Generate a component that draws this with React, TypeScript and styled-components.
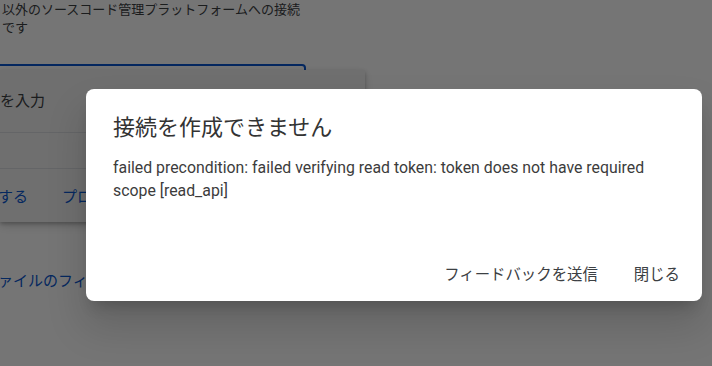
import React from 'react';
import styled, { createGlobalStyle } from 'styled-components';

const GlobalStyle = createGlobalStyle`
    html, body {
        margin: 0;
        padding: 0;
    }
    body {
        font-family: Roboto, "Noto Sans CJK JP", sans-serif;
    }
`;

const Page = styled.div`
    width: 712px;
    height: 366px;
    background-color: #ffffff;
    position: relative;
    overflow: hidden;
`;

const Content = styled.div`
    display: flex;
    flex-direction: column;
    padding-top: 1px;
`;

const Description = styled.p`
    margin: 0;
    padding-left: 2px;
    font-size: 13px;
    line-height: 18px;
    color: #3c4043;
    width: 310px;
`;

const Field = styled.div`
    margin-top: 27px;
    margin-left: -10px;
    width: 312px;
    height: 54px;
    border: 2px solid #0b57d0;
    border-radius: 4px;
`;

const Menu = styled.div`
    position: absolute;
    top: 70px;
    left: 0;
    width: 365px;
    height: 152px;
    background-color: #f1f1f1;
    box-shadow: 0 2px 4px rgba(0, 0, 0, 0.25), 0 4px 10px rgba(0, 0, 0, 0.12);
    display: flex;
    flex-direction: column;
`;

const MenuRow = styled.div<{ $height: number }>`
    height: ${(p) => p.$height}px;
    border-bottom: 1px solid #dadce0;
    display: flex;
    align-items: center;
    gap: 36px;
    font-size: 15px;
    color: #3c4043;
    padding-bottom: 3px;
    box-sizing: border-box;
    &:last-child {
        border-bottom: none;
        padding-bottom: 0;
    }
`;

const MenuLink = styled.span`
    color: #0b57d0;
    font-size: 15px;
    margin-left: -2px;
`;

const FileLink = styled.a`
    margin-top: 147px;
    font-size: 15px;
    color: #0b57d0;
    text-decoration: none;
    margin-left: -17px;
`;

const Scrim = styled.div`
    position: absolute;
    inset: 0;
    background-color: rgba(0, 0, 0, 0.54);
    display: flex;
    align-items: flex-start;
    padding: 89px 0 0 86px;
`;

const Dialog = styled.div`
    width: 616px;
    height: 212px;
    box-sizing: border-box;
    background-color: #ffffff;
    border-radius: 8px;
    box-shadow: 0 11px 15px -7px rgba(0, 0, 0, 0.2), 0 24px 38px 3px rgba(0, 0, 0, 0.14);
    padding: 24px 0 10px 27px;
    display: flex;
    flex-direction: column;
`;

const Title = styled.h2`
    margin: 0;
    font-size: 22px;
    line-height: 30px;
    font-weight: 400;
    color: #333333;
`;

const Message = styled.p`
    margin: 13px 0 0;
    font-size: 15.85px;
    line-height: 23px;
    color: #3c3c3c;
    padding-right: 24px;
`;

const Actions = styled.div`
    margin-top: auto;
    display: flex;
    justify-content: flex-end;
    gap: 20px;
    padding-right: 14px;
`;

const TextButton = styled.button`
    height: 36px;
    padding: 0 8px;
    border: none;
    background: none;
    font-family: Roboto, "Noto Sans CJK JP", sans-serif;
    font-size: 15.4px;
    color: #3c4043;
    cursor: pointer;
`;

function App() {
    return (
        <Page>
            <GlobalStyle />
            <Content>
                <Description>以外のソースコード管理プラットフォームへの接続です</Description>
                <Field />
                <FileLink href="#">ファイルのフィードを表示</FileLink>
            </Content>
            <Menu>
                <MenuRow $height={63}>を入力</MenuRow>
                <MenuRow $height={36} />
                <MenuRow $height={53}>
                    <MenuLink>する</MenuLink>
                    <MenuLink>プロジェクトを選択</MenuLink>
                </MenuRow>
            </Menu>
            <Scrim>
                <Dialog role="dialog">
                    <Title>接続を作成できません</Title>
                    <Message>
                        failed precondition: failed verifying read token: token does not have required scope [read_api]
                    </Message>
                    <Actions>
                        <TextButton>フィードバックを送信</TextButton>
                        <TextButton>閉じる</TextButton>
                    </Actions>
                </Dialog>
            </Scrim>
        </Page>
    );
}

export default App;
